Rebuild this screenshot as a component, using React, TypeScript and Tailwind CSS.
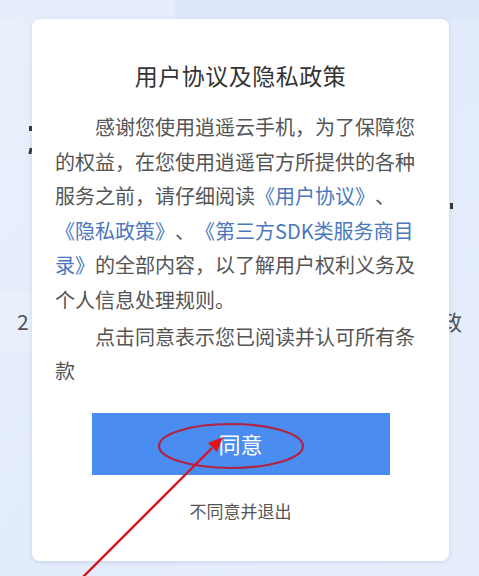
import React from "react";

export default function App() {
  const font = { fontFamily: '"Noto Sans CJK SC", "Noto Sans", sans-serif' };
  return (
    <div
      className="relative w-[479px] h-[576px] overflow-hidden bg-gradient-to-br from-[#e9f0fc] via-[#e3ecfb] to-[#e6eefb] [text-spacing-trim:space-all]"
      style={font}
    >
      {/* background decorations */}
      <div className="absolute left-0 top-0 w-[175px] h-[20px] bg-[#e6eefc]" />
      <div className="absolute left-[175px] top-0 w-[304px] h-[20px] bg-[#dde8fb]" />
      <div className="absolute left-0 top-[292px] w-[40px] h-[60px] bg-[#e9f0fb]" />
      <div className="absolute left-[17px] top-[306px] text-[21px] leading-[30px] text-[#505050]">2</div>
      <div className="absolute left-[441px] top-[306px] text-[21px] leading-[30px] text-[#505050]">政</div>
      <div className="absolute left-[29px] top-[126px] w-[3px] h-[5px] bg-[#333]" />
      <div className="absolute left-[29px] top-[148px] w-[3px] h-[6px] bg-[#333] -skew-x-12" />
      <div className="absolute left-[450px] top-[203px] w-[3px] h-[6px] bg-[#333]" />

      <div className="relative pt-[19px] pl-[32px]">
        <div className="w-[417px] h-[542px] bg-white rounded-[8px] shadow-[0_1px_4px_rgba(120,140,180,0.25)] flex flex-col items-center pt-[40px]">
          <div className="text-[23px] leading-[32px] text-[#333] tracking-[0.5px]">用户协议及隐私政策</div>
          <div className="self-start ml-[23px] mt-[19px] w-[362px] text-[20px] leading-[34.6px] text-[#555]">
            <p className="indent-[40px]">
              感谢您使用逍遥云手机，为了保障您
              <br />
              的权益，在您使用逍遥官方所提供的各种
              <br />
              服务之前，请仔细阅读<span className="text-[#4a77bd]">《用户协议》</span>、
              <br />
              <span className="text-[#4a77bd]">《隐私政策》</span>、<span className="text-[#4a77bd]">《第三方SDK类服务商目</span>
              <br />
              <span className="text-[#4a77bd]">录》</span>的全部内容，以了解用户权利义务及
              <br />
              个人信息处理规则。
            </p>
            <p className="indent-[40px] mt-[2px]">
              点击同意表示您已阅读并认可所有条
              <br />
              款
            </p>
          </div>
          <div className="mt-[24px] w-[298px] h-[62px] bg-[#4a8cf0] flex items-center justify-center text-white text-[22px]">
            同意
          </div>
          <div className="mt-[24px] text-[17px] leading-[24px] text-[#555]">不同意并退出</div>
        </div>
      </div>

      <svg className="absolute left-0 top-0 pointer-events-none" width="479" height="576" viewBox="0 0 479 576">
        <ellipse cx="231" cy="446" rx="72" ry="22" fill="none" stroke="#b3223f" strokeWidth="2.2" />
        <line x1="80" y1="580" x2="212" y2="448" stroke="#d8131f" strokeWidth="2.4" />
        <polygon points="223,437 208,443 217,452" fill="#e0121c" />
      </svg>
    </div>
  );
}
